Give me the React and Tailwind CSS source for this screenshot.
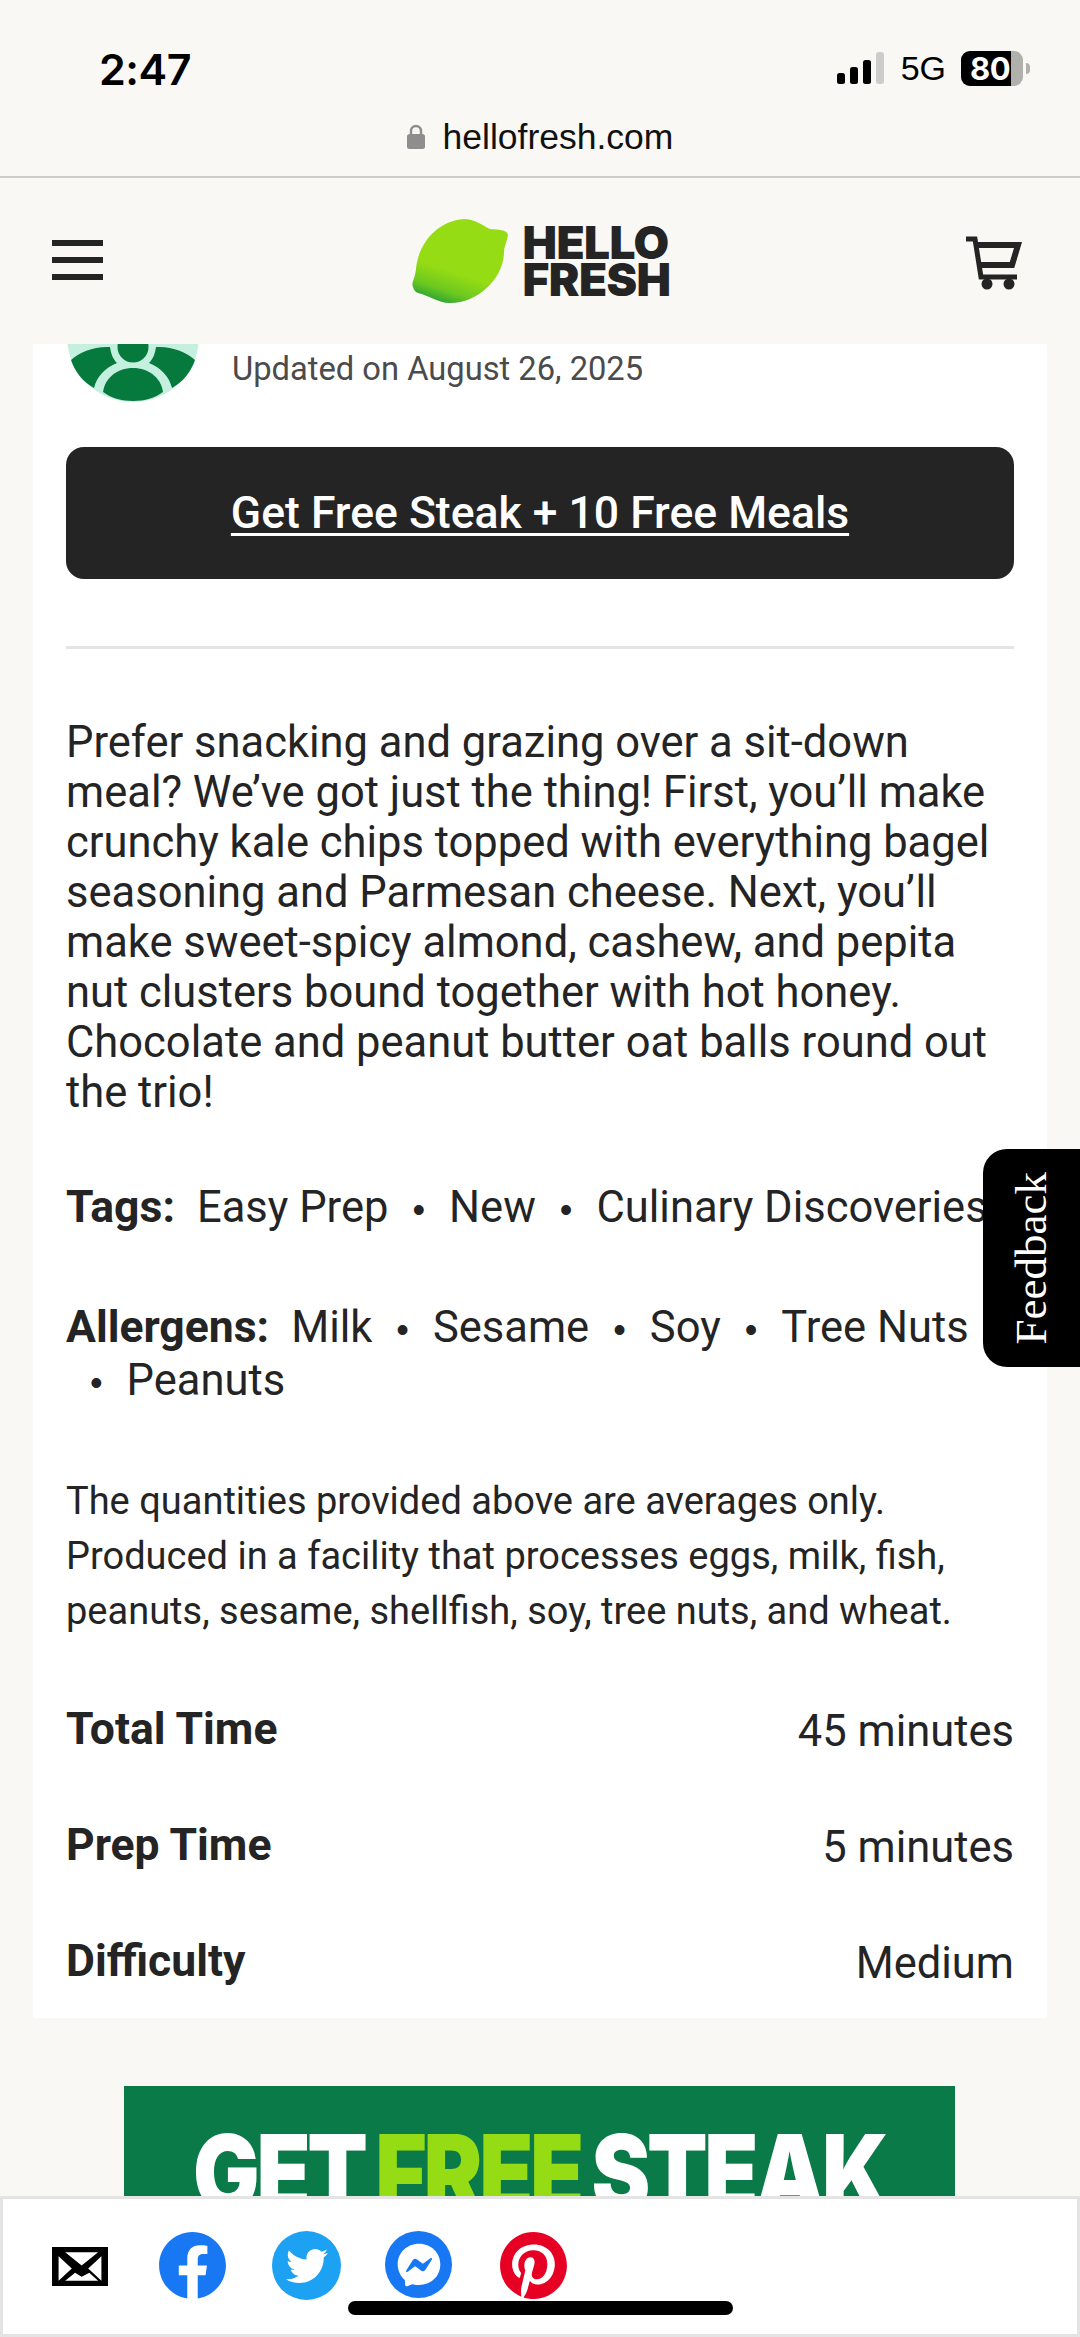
import React from 'react';
import { FaFacebook, FaTwitter, FaFacebookMessenger, FaPinterest } from 'react-icons/fa';

const tags = ['Easy Prep', 'New', 'Culinary Discoveries'];
const allergens = ['Milk', 'Sesame', 'Soy', 'Tree Nuts', 'Peanuts'];
const facts = [
    { label: 'Total Time', value: '45 minutes' },
    { label: 'Prep Time', value: '5 minutes' },
    { label: 'Difficulty', value: 'Medium' },
];

function StatusBar() {
    return (
        <div className="h-[106px] flex items-start justify-between pl-[99px] pr-[50px] pt-[46px] font-['Inter',sans-serif] text-black">
            <span className="text-[43px] leading-[46px] font-semibold tracking-[-0.5px]">2:47</span>
            <div className="flex items-center h-[40px] mt-[2px]">
                <svg width="48" height="32" viewBox="0 0 48 32" className="mr-[16px]">
                    <rect x="0" y="21" width="8" height="11" rx="2.5" fill="#000" />
                    <rect x="13" y="15" width="8" height="17" rx="2.5" fill="#000" />
                    <rect x="26" y="8" width="8" height="24" rx="2.5" fill="#000" />
                    <rect x="39" y="0" width="8" height="32" rx="2.5" fill="#ccc" />
                </svg>
                <span className="text-[34px] leading-[40px] mr-[15px] font-['Liberation_Sans',sans-serif]">5G</span>
                <div className="relative w-[62px] h-[35px] rounded-[9px] bg-[#b0b0ac] overflow-hidden">
                    <div className="absolute left-0 top-0 bottom-0 w-[50px] bg-black" />
                    <span className="absolute left-[9px] top-0 text-[31px] leading-[35px] font-bold tracking-[-0.5px] text-white">80</span>
                </div>
                <div className="w-[4px] h-[11px] ml-[3px] rounded-r-full bg-[#b0b0ac]" />
            </div>
        </div>
    );
}

function AddressBar() {
    return (
        <div className="h-[72px] flex items-start justify-center gap-[18px] border-b-2 border-[#cfcfca]">
            <svg width="18" height="25" viewBox="0 0 18 25" className="mt-[18px]">
                <path d="M4 11V7a5 5 0 0 1 10 0v4" fill="none" stroke="#8e8e8e" strokeWidth="2.4" />
                <rect x="0" y="10" width="18" height="15" rx="2.5" fill="#8e8e8e" />
            </svg>
            <span className="text-[35.5px] leading-[40px] mt-[11px] font-['Liberation_Sans',sans-serif] text-[#111]">hellofresh.com</span>
        </div>
    );
}

function Logo() {
    return (
        <div className="flex items-center gap-[15px]">
            <svg width="98" height="84" viewBox="0 0 98 84">
                <defs>
                    <linearGradient id="lime" x1="0.35" y1="0.6" x2="0.2" y2="1">
                        <stop offset="0" stopColor="#96dc14" />
                        <stop offset="0.55" stopColor="#6cc820" />
                        <stop offset="1" stopColor="#1f9a38" />
                    </linearGradient>
                </defs>
                <path d="M3 68C1 64 5 60 6 50C8 26 26 2 54 0C64 0 72 6 80 10C88 11 97 10 98 16C97 23 94 27 94 34C93 60 68 84 40 84C28 84 18 76 8 74C5 73 4 71 3 68Z" fill="url(#lime)" />
            </svg>
            <div className="font-['Inter',sans-serif] font-black text-[#242424] text-[46px] leading-[37px] tracking-[-0.6px]">
                <div>HELLO</div>
                <div>FRESH</div>
            </div>
        </div>
    );
}

function NavBar() {
    return (
        <div className="h-[166px] flex items-start justify-between pl-[52px] pr-[58px]">
            <div className="w-[51px] mt-[62px] flex flex-col gap-[11px]">
                <div className="h-[6px] bg-[#242424]" />
                <div className="h-[6px] bg-[#242424]" />
                <div className="h-[6px] bg-[#242424]" />
            </div>
            <div className="mt-[41px] ml-[11px]">
                <Logo />
            </div>
            <svg width="56" height="54" viewBox="0 0 56 54" className="mt-[58px]" fill="none" stroke="#242424">
                <path d="M0 3H9L15 41H51" strokeWidth="5" />
                <path d="M10 9H52L46 29H14" strokeWidth="6" />
                <circle cx="21" cy="48" r="5.5" fill="#242424" stroke="none" />
                <circle cx="43" cy="48" r="5.5" fill="#242424" stroke="none" />
            </svg>
        </div>
    );
}

function Avatar() {
    return (
        <svg width="132" height="132" viewBox="0 0 132 132" className="shrink-0 -mt-[74px] ml-[1px]">
            <circle cx="66" cy="66" r="66" fill="#c5f0e0" />
            <path d="M4 90C12 82 28 76 43 77C44 84 46 89 50 93C38 98 30 106 27 118C16 112 8 102 4 90Z" fill="#067a3c" />
            <path d="M128 90C120 82 104 76 89 77C88 84 86 89 82 93C94 98 102 106 105 118C116 112 124 102 128 90Z" fill="#067a3c" />
            <circle cx="66" cy="77" r="15.5" fill="#067a3c" />
            <path d="M36 122C38 108 50 98 66 98C82 98 94 108 96 122C88 128 78 131 66 131C54 131 44 128 36 122Z" fill="#067a3c" />
        </svg>
    );
}

function Dot() {
    return <span className="mx-[24px] font-['Liberation_Sans',sans-serif] text-[36px] leading-none">•</span>;
}

function RecipeCard() {
    return (
        <div className="mx-[33px] h-[1674px] bg-white overflow-hidden px-[33px] text-[#242424] font-['Roboto',sans-serif]">
            <div className="flex items-start gap-[33px] h-[103px]">
                <Avatar />
                <span className="text-[32.7px] leading-[40px] text-[#4b4b4b] mt-[5px]">Updated on August 26, 2025</span>
            </div>
            <button className="w-full h-[132px] rounded-[18px] bg-[#242424] text-white text-[44.5px] font-medium underline underline-offset-[5px] decoration-[3px]">
                Get Free Steak + 10 Free Meals
            </button>
            <div className="h-[3px] mt-[67px] bg-[#e4e4e4]" />
            <p className="mt-[69px] text-[43.5px] leading-[50px]">
                Prefer snacking and grazing over a sit-down meal? We’ve got just the thing! First, you’ll make crunchy kale chips topped with everything bagel seasoning and Parmesan cheese. Next, you’ll make sweet-spicy almond, cashew, and pepita nut clusters bound together with hot honey. Chocolate and peanut butter oat balls round out the trio!
            </p>
            <p className="mt-[63px] text-[43.5px] leading-[52px] whitespace-nowrap">
                <b className="text-[44.5px] font-bold mr-[22px]">Tags:</b>
                {tags.map((tag, i) => (
                    <span key={tag}>{i > 0 && <Dot />}{tag}</span>
                ))}
            </p>
            <p className="mt-[67px] text-[43.5px] leading-[53px]">
                <b className="text-[44.5px] font-bold mr-[22px]">Allergens:</b>
                {allergens.map((item, i) => (
                    <span key={item} className="inline-block">{i > 0 && <Dot />}{item}</span>
                ))}
            </p>
            <p className="mt-[67px] text-[38px] leading-[55px]">
                The quantities provided above are averages only.<br />
                Produced in a facility that processes eggs, milk, fish,<br />
                peanuts, sesame, shellfish, soy, tree nuts, and wheat.
            </p>
            <div className="mt-[35px] flex flex-col">
                {facts.map(f => (
                    <div key={f.label} className="h-[116px] flex justify-between items-center">
                        <b className="text-[44.5px] font-bold -mt-[5px]">{f.label}</b>
                        <span className="text-[43.5px]">{f.value}</span>
                    </div>
                ))}
            </div>
        </div>
    );
}

function Banner() {
    return (
        <div className="mx-[124px] mt-[68px] w-[831px] h-[400px] bg-[#0a7a48] pt-[26px] text-center font-['Inter',sans-serif] font-black text-[104px] leading-[120px] tracking-[-4px] [word-spacing:-4px] text-white whitespace-nowrap">
            <span className="inline-block scale-x-[0.85]">GET <span className="text-[#96dc14]">FREE</span> STEAK</span>
        </div>
    );
}

function ShareBar() {
    return (
        <div className="absolute left-0 right-0 bottom-0 h-[141px] bg-white border-[3px] border-[#e4e4e4] flex items-start pl-[49px]">
            <svg width="56" height="39" viewBox="0 0 51 38" preserveAspectRatio="none" className="mt-[48px]">
                <rect width="51" height="38" fill="#000" />
                <path d="M12 5H42L27 18Z M6 9V33L18 21Z M45 9V33L33 21Z M12 33L21 25L27 29L34 25L42 33Z" fill="#fff" />
            </svg>
            <div className="relative w-[69px] h-[69px] ml-[50px] mt-[32px] rounded-full bg-white">
                <FaFacebook className="w-full h-full text-[#1877f2]" />
            </div>
            <div className="w-[69px] h-[69px] ml-[45px] mt-[32px] rounded-full bg-[#1da1f2] flex items-center justify-center">
                <FaTwitter className="w-[42px] h-[42px] text-white" />
            </div>
            <div className="w-[67px] h-[67px] ml-[44px] mt-[32px] rounded-full bg-[#1877f2] flex items-center justify-center">
                <FaFacebookMessenger className="w-[44px] h-[44px] text-white" />
            </div>
            <div className="w-[69px] h-[69px] ml-[47px] mt-[32px]">
                <FaPinterest className="w-full h-full text-[#e60023]" />
            </div>
            <div className="absolute left-[345px] top-[102px] w-[385px] h-[14px] rounded-full bg-black" />
        </div>
    );
}

function FeedbackTab() {
    return (
        <div className="absolute right-0 top-[1149px] w-[97px] h-[218px] rounded-l-[24px] bg-black flex items-center justify-center">
            <span className="[writing-mode:vertical-rl] rotate-180 font-['Liberation_Serif',serif] text-white text-[45px] leading-none">Feedback</span>
        </div>
    );
}

export default function App() {
    return (
        <div className="relative w-[1080px] h-[2337px] overflow-hidden bg-[#f9f8f4]">
            <StatusBar />
            <AddressBar />
            <NavBar />
            <RecipeCard />
            <Banner />
            <FeedbackTab />
            <ShareBar />
        </div>
    );
}
